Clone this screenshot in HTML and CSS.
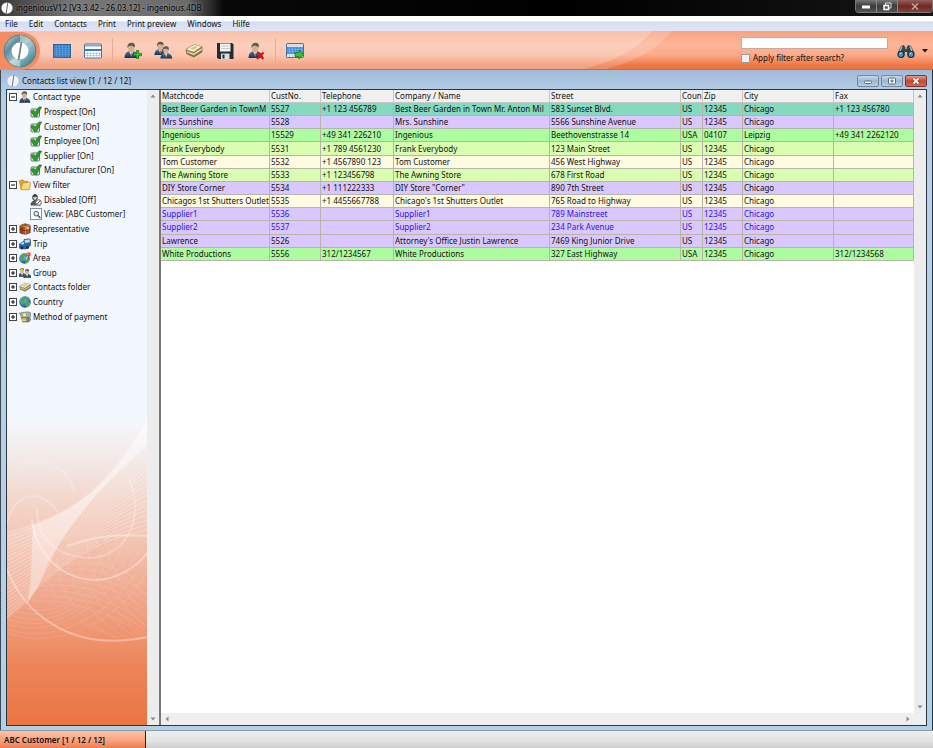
FILE: index.html
```
<!DOCTYPE html>
<html lang="en">
<head>
  <meta charset="UTF-8">
  <meta name="viewport" content="width=device-width, initial-scale=1.0">
  <link rel="stylesheet" href="styles.css">
  <title>ingeniousV12 [V3.3.42 - 26.03.12] - ingenious.4DB</title>
</head>
<body>
  <!-- shared icon shapes -->
  <svg class="defs" width="0" height="0" aria-hidden="true">
    <defs>
      <linearGradient id="suit" x1="0" y1="0" x2="0" y2="1"><stop offset="0" stop-color="#4c7fa8"/><stop offset="1" stop-color="#102f50"/></linearGradient>
      <linearGradient id="ring" x1="0" y1="0" x2="1" y2="1"><stop offset="0" stop-color="#d8e4e6"/><stop offset=".3" stop-color="#5d8d9b"/><stop offset=".55" stop-color="#9fc5cc"/><stop offset="1" stop-color="#1b6884"/></linearGradient>
      <radialGradient id="sea" cx=".35" cy=".3" r=".8"><stop offset="0" stop-color="#8fd0f5"/><stop offset=".6" stop-color="#2c7cc4"/><stop offset="1" stop-color="#123c78"/></radialGradient>
      <symbol id="logo" viewBox="0 0 16 16">
        <circle cx="8" cy="8" r="7.5" fill="#fff"/>
        <path d="M9.200 0 6.800 16" fill="none" stroke="#555" stroke-width="1.200"/>
      </symbol>
      <symbol id="person" viewBox="0 0 16 16">
        <path d="M.5 15.500C.5 11 3 8.500 7 8.500s8 2 8 7z" fill="url(#suit)"/>
        <path d="M5.200 9h3.800L7.400 14z" fill="#fff"/>
        <path d="M6.600 10h1l.4 3.400-.8 1-.7-1z" fill="#c43"/>
        <ellipse cx="7.200" cy="5.300" rx="3.200" ry="4" fill="#d9b08a"/>
        <path d="M3.600 5.500C2.800 1.800 5.200.2 7.500.2c2.800 0 4 1.800 3.100 4.800C9.300 3.300 6.200 2.900 4.800 3.600z" fill="#5b5a55"/>
      </symbol>
      <symbol id="plus" viewBox="0 0 8 8"><path d="M3 .5h2V3h2.500v2H5v2.500H3V5H.5V3H3z" fill="#35c52c" stroke="#147516" stroke-width=".7"/></symbol>
      <symbol id="folder" viewBox="0 0 18 14">
        <path d="M1 6 9 1.500 17 3.500v5L9 13.500 2 10.500z" fill="#8e7d50" stroke="#665b3c" stroke-width=".7"/>
        <path d="M1 6 9 1 17 3 8.500 8.500z" fill="#fbf8df" stroke="#9b8e68" stroke-width=".6"/>
        <path d="M2 8.200 8.600 10.800 17 5.500" fill="none" stroke="#f4e8b8" stroke-width="1.200"/>
        <path d="M5 5 10 2.500l3 1-5 3z" fill="#e2c566"/>
      </symbol>
      <symbol id="globe" viewBox="0 0 16 16">
        <circle cx="8" cy="8" r="7.300" fill="url(#sea)" stroke="#245586" stroke-width=".6"/>
        <path d="M2 5C4 1.500 7 1 9 1.500L10 4 7.500 5.500 8 8 5 9.500 3.500 8zM9 8.500l4-1.500 2 2c-.3 3-2.300 5-5 6L8.500 12zM11 3l2.500 1 1 2-2.500-.5z" fill="#4ea844"/>
      </symbol>
      <symbol id="check" viewBox="0 0 12 12">
        <rect x="1" y="3" width="8.500" height="8" rx="1" fill="#cfe3cf" stroke="#4f7a50" stroke-width=".9"/>
        <path d="M1 5.500 3.600 4.300 5.300 6.300 9 1h2.600L6.500 10.500H4.300z" fill="#2f9c2c" stroke="#155c16" stroke-width=".6"/>
      </symbol>
      <symbol id="open-box" viewBox="0 0 8 8"><rect x=".5" y=".5" width="7" height="7" fill="#fff" stroke="#444"/><path d="M2 4h4" stroke="#111"/></symbol>
      <symbol id="closed-box" viewBox="0 0 8 8"><rect x=".5" y=".5" width="7" height="7" fill="#fff" stroke="#444"/><path d="M2 4h4M4 2v4" stroke="#111"/></symbol>
      <symbol id="up" viewBox="0 0 6 4"><path d="M3 .5 5.500 3.500h-5z" fill="#888"/></symbol>
    </defs>
  </svg>

  <div class="app">
    <header class="titlebar">
      <svg class="title-logo"><use href="#logo"/></svg>
      <h1>ingeniousV12 [V3.3.42 - 26.03.12] - ingenious.4DB</h1>
      <div class="title-buttons">
        <button aria-label="Minimize"><svg width="10" height="8"><rect x="1" y="3.500" width="8" height="3" fill="#fff"/></svg></button>
        <button aria-label="Restore"><svg width="10" height="9"><path d="M3.500 3V1h5.500v5H7" fill="none" stroke="#ddd"/><rect x="2" y="3.500" width="4.500" height="4" fill="#555" stroke="#fff" stroke-width="1.500"/></svg></button>
        <button class="close" aria-label="Close"><svg width="10" height="9"><path d="M2 1.500 8 7.500M8 1.500 2 7.500" stroke="#c9a09c" stroke-width="1.500"/></svg></button>
      </div>
    </header>

    <nav class="menubar">
      <a href="#">File</a>
      <a href="#">Edit</a>
      <a href="#">Contacts</a>
      <a href="#">Print</a>
      <a href="#">Print preview</a>
      <a href="#">Windows</a>
      <a href="#">Hilfe</a>
    </nav>

    <div class="toolbar">
      <svg class="swoosh" viewBox="0 0 933 38" preserveAspectRatio="none" aria-hidden="true">
        <path d="M0 0H672Q652 26 606 38H0z" fill="#fff" opacity=".18"/>
        <path d="M0 0H652Q632 26 584 38H0z" fill="#fff" opacity=".2"/>
      </svg>
      <button class="home" aria-label="Home">
        <svg width="34" height="34" viewBox="0 0 34 34">
          <circle cx="17" cy="17" r="16" fill="url(#ring)" stroke="#5e7f88"/>
          <path d="M17 1a16 16 0 0 1 11 5l-7 6-4-2zM6 28a16 16 0 0 0 11 5v-8l-4-2z" fill="#e8f1ee" opacity=".45"/>
          <circle cx="17" cy="17" r="8.500" fill="#fff"/>
          <path d="M18.500 8 15.500 26" fill="none" stroke="#647f88" stroke-width="1.600"/>
        </svg>
      </button>
      <div class="tools">
        <button aria-label="Show all">
          <svg width="20" height="20" viewBox="0 0 20 20"><rect x="1.500" y="3.500" width="17" height="13" fill="#3280cf" stroke="#2c669e"/><path d="M2 5.500h16M2 7.500h16M2 9.500h16M2 11.500h16M2 13.500h16M4.500 4v12M7.500 4v12M10.500 4v12M13.500 4v12M16.500 4v12" stroke="#73aee6" stroke-width=".4"/></svg>
        </button>
        <button aria-label="Show selection">
          <svg width="20" height="20" viewBox="0 0 20 20"><rect x="1.500" y="3" width="17" height="14" rx="1" fill="#fff" stroke="#45719d"/><path d="M2 4.500h16" stroke="#88a9ca" stroke-width="2"/><rect x="2" y="8" width="16" height="2" fill="#2e7fcb"/><path d="M2 12.500h16M2 14.500h16M4.500 11v6M7.500 11v6M10.500 11v6M13.500 11v6M16.500 11v6" stroke="#a8c2da" stroke-width=".7"/></svg>
        </button>
      </div>
      <span class="separator"></span>
      <div class="tools">
        <button aria-label="New contact"><svg width="20" height="20" viewBox="0 0 20 20"><use href="#person" x="2" y="1" width="16" height="17"/><use href="#plus" x="11" y="9" width="9" height="9"/></svg></button>
        <button aria-label="Contacts"><svg width="20" height="20" viewBox="0 0 20 20"><use href="#person" x="1" y="0" width="14" height="15"/><use href="#person" x="7" y="4" width="13" height="15"/></svg></button>
        <button aria-label="Contacts folder"><svg width="20" height="20" viewBox="0 0 20 20"><use href="#folder" x="1" y="2" width="18" height="15"/></svg></button>
        <button aria-label="Save"><svg width="20" height="20" viewBox="0 0 20 20"><path d="M2 2h15l1.500 1.500V18H3.500L2 16.500z" fill="#252a2e"/><rect x="5" y="2.500" width="10.500" height="8" fill="#f4f4f4"/><path d="M6 5h8.500M6 7.500h8.500" stroke="#c9c9c9"/><rect x="6" y="12.500" width="8.500" height="5.500" fill="#d9dcdf"/><rect x="7.500" y="13.500" width="2" height="4" fill="#252a2e"/></svg></button>
        <button aria-label="Delete contact"><svg width="20" height="20" viewBox="0 0 20 20"><use href="#person" x="2" y="1" width="16" height="17"/><path d="M11 11.500 17.500 18M17.500 11.500 11 18" stroke="#d31515" stroke-width="2.200"/></svg></button>
      </div>
      <span class="separator"></span>
      <div class="tools">
        <button aria-label="Export list">
          <svg width="20" height="20" viewBox="0 0 20 20"><rect x="1.500" y="2.500" width="17" height="14" rx="1" fill="#4290d8" stroke="#45719d"/><rect x="2" y="3" width="16" height="3" fill="#d5dfe9"/><path d="M2 8.500h16M2 10.500h16" stroke="#78b0e4" stroke-width=".6"/><rect x="2" y="13" width="16" height="3" fill="#dce9f5"/><path d="M4.500 6v10M7.500 6v10M10.500 6v10M13.500 6v10M16.500 6v10" stroke="#8dbce6" stroke-width=".5"/><path d="M10 11.500h4V9l5 4.500-5 4.500v-2.500h-4z" fill="#36c22f" stroke="#157517" stroke-width=".8"/></svg>
        </button>
      </div>
      <div class="search">
        <input type="text" class="search-box" aria-label="Search">
        <label class="filter"><input type="checkbox"> Apply filter after search?</label>
      </div>
      <button class="find" aria-label="Find">
        <svg width="18" height="16" viewBox="0 0 18 16"><path d="M4 3 7 2l1 2h2l1-2 3 1 3.500 7-4 4H11L10 9H8l-1 5H4L.5 10z" fill="#34464b"/><path d="M5 3.500 3 8M13 3.500 15 8M8 5h2" stroke="#b7c8c8" stroke-width="1.300"/><circle cx="4" cy="11.500" r="3" fill="#4e91be" stroke="#142c3a" stroke-width="1.200"/><circle cx="14" cy="11.500" r="3" fill="#4e91be" stroke="#142c3a" stroke-width="1.200"/><path d="M2.500 11 4.500 9.500M12.500 11l2-1.500" stroke="#d5ebf8"/></svg>
      </button>
      <button class="drop" aria-label="Search options"><svg width="6" height="4"><path d="M0 0h6L3 3.500z" fill="#151515"/></svg></button>
    </div>

    <main class="window">
      <header class="caption">
        <svg class="caption-logo"><use href="#logo"/></svg>
        <h2>Contacts list view [1 / 12 / 12]</h2>
        <div class="caption-buttons">
          <button aria-label="Minimize list"><svg width="10" height="8"><rect x="1.500" y="4" width="7" height="2.500" rx="1" fill="#fff" stroke="#59687a"/></svg></button>
          <button aria-label="Maximize list"><svg width="10" height="8"><rect x="1.500" y="1" width="7" height="6" rx="1" fill="#fff" stroke="#59687a"/><rect x="4" y="3" width="2" height="2" fill="#8da6c0" stroke="#59687a" stroke-width=".7"/></svg></button>
          <button class="close" aria-label="Close list"><svg width="10" height="8"><path d="M2.500 1.500 7.500 6.500M7.500 1.500 2.500 6.500" stroke="#5e2a28" stroke-width="3"/><path d="M2.500 1.500 7.500 6.500M7.500 1.500 2.500 6.500" stroke="#fff" stroke-width="1.800"/></svg></button>
        </div>
      </header>

      <div class="panes">
        <aside class="sidebar">
          <div class="tree-area">
            <ul class="tree">
              <li><svg class="box"><use href="#open-box"/></svg><svg class="icon"><use href="#person"/></svg>Contact type</li>
              <li class="child"><svg class="icon"><use href="#check"/></svg><span class="current">Prospect [On]</span></li>
              <li class="child"><svg class="icon"><use href="#check"/></svg>Customer [On]</li>
              <li class="child"><svg class="icon"><use href="#check"/></svg>Employee [On]</li>
              <li class="child"><svg class="icon"><use href="#check"/></svg>Supplier [On]</li>
              <li class="child"><svg class="icon"><use href="#check"/></svg>Manufacturer [On]</li>
              <li><svg class="box"><use href="#open-box"/></svg><svg class="icon" viewBox="0 0 12 12"><path d="M.5 3V1.500L4 .8l1.500 1.500H9v8.200H2z" fill="#e2a32e" stroke="#b77c1c" stroke-width=".6"/><path d="M2 10.800 3.500 4.500 11.600 3.500 10.500 10.800z" fill="#fbd871" stroke="#bd8420" stroke-width=".6"/><path d="M4.300 5.300 10.500 4.600" stroke="#fff3bd"/></svg>View filter</li>
              <li class="child"><svg class="icon" viewBox="0 0 12 12"><path d="M.5 11.500c0-3.500 2-5 5-5s5 1.500 5 5z" fill="#555"/><ellipse cx="5" cy="3.500" rx="2.300" ry="3" fill="#ccc" stroke="#333"/><path d="M3 3C3 0 7 0 7.300 2.500z" fill="#333"/><circle cx="8.500" cy="8.500" r="2.800" fill="#eee" stroke="#666"/><path d="M6.600 10.400 10.400 6.600" stroke="#666"/></svg>Disabled [Off]</li>
              <li class="child"><svg class="icon" viewBox="0 0 12 12"><rect x=".5" y=".5" width="11" height="11" fill="#fff" stroke="#8091a3"/><circle cx="6.200" cy="5.700" r="2.300" fill="#d9ecf8" stroke="#45566a"/><path d="M8 7.500 10.300 10" stroke="#45566a" stroke-width="1.500"/></svg>View: [ABC Customer]</li>
              <li><svg class="box"><use href="#closed-box"/></svg><svg class="icon" viewBox="0 0 12 12"><path d="M.8 2.500 6 .7l5.300 1.500v7.500L6.500 11.500.8 10z" fill="#a75424" stroke="#6b3516" stroke-width=".6"/><path d="M.8 2.500 6.500 3.800 11.300 2.200M6.500 3.800v7.700" stroke="#e1a169" fill="none" stroke-width=".8"/><path d="M3 3v8M1 6.500l5.500 1 5-1.500" stroke="#5e2c10" fill="none" stroke-width=".7"/><rect x="7.500" y="4" width="2.500" height="2.500" fill="#e9b880"/></svg>Representative</li>
              <li><svg class="box"><use href="#closed-box"/></svg><svg class="icon" viewBox="0 0 12 12"><path d="M.5 6 5 3V1.500L10.500.8l1 1V7.500L7 11l-6.500-.7z" fill="#2565a0" stroke="#173b5c" stroke-width=".6"/><path d="M5.500 2 10.800 1.300v3L6 5z" fill="#b9dbf1"/><path d="M1.200 6 4.800 3.800v2.700z" fill="#d8edf9"/><circle cx="3" cy="10" r="1.400" fill="#222"/><circle cx="8.500" cy="9.600" r="1.400" fill="#222"/></svg>Trip</li>
              <li><svg class="box"><use href="#closed-box"/></svg><svg class="icon" viewBox="0 0 12 12"><use href="#globe" x="0" y="1" width="11" height="11"/><circle cx="9.500" cy="2.500" r="2.300" fill="#e2503d"/><path d="M8.500 4.500 7 7.500" stroke="#eee"/><circle cx="9" cy="2" r=".7" fill="#ffc5b8"/></svg>Area</li>
              <li><svg class="box"><use href="#closed-box"/></svg><svg class="icon" viewBox="0 0 12 12"><use href="#person" x="-1" y="0" width="9" height="11"/><use href="#person" x="4" y="1" width="9" height="11"/><ellipse cx="3" cy="3.500" rx="1.500" ry="2" fill="#e9bf4c"/></svg>Group</li>
              <li><svg class="box"><use href="#closed-box"/></svg><svg class="icon"><use href="#folder"/></svg>Contacts folder</li>
              <li><svg class="box"><use href="#closed-box"/></svg><svg class="icon"><use href="#globe"/></svg>Country</li>
              <li><svg class="box"><use href="#closed-box"/></svg><svg class="icon" viewBox="0 0 12 12"><path d="M.5 2 9 .8l2.500 1V6L3 7.500z" fill="#a7b58d" stroke="#66705a" stroke-width=".6"/><circle cx="5.500" cy="3.800" r="1.500" fill="#e8edd8"/><path d="M2.500 6.500h7V11h-6z" fill="#b49b63" stroke="#6e5c38" stroke-width=".6"/><path d="M3 8h6M3 9.500h6" stroke="#efe0b2" stroke-width=".8"/><circle cx="9.500" cy="8.500" r="2" fill="#7f8a7d" stroke="#555" stroke-width=".5"/></svg>Method of payment</li>
            </ul>
            <svg class="waves" viewBox="0 0 140 306" preserveAspectRatio="none" aria-hidden="true">
              <g fill="none" stroke="#fff">
                <path d="M0 114C45 100 90 85 140 0V30C100 60 65 100 50 130 38 155 30 175 20 184L0 200z" fill="#fff" fill-opacity=".15" stroke="none"/>
                <path d="M26 106C75 90 105 60 140 2V26C100 60 66 100 42 142 36 156 30 172 20 184 26 160 24 130 26 106z" fill="#fff" fill-opacity=".35" stroke="none"/>
                <g opacity=".4" stroke-width=".8">
                  <path d="M0 114C35 102 95 90 140 6M0 118C36 105 92 90 140 11M0 122C37 108 90 91 140 16M0 126C37 111 87 93 140 21M0 130C38 114 85 95 140 26M0 134C38 117 83 97 140 31M0 138C38 120 80 100 140 36"/>
                  <path d="M0 142C38 123 78 103 140 41M0 146C38 126 76 105 140 46M0 150C38 130 74 108 140 51M0 154C38 134 72 110 140 56M0 158C38 138 70 112 140 61M0 162C38 142 69 114 140 66M0 166C37 146 68 116 140 71"/>
                  <path d="M0 170C36 150 66 118 140 76M0 174C35 154 65 120 140 81M0 178C33 158 63 122 140 86M0 182C32 162 62 123 140 91M0 186C30 166 61 124 140 96M0 190C29 170 60 125 140 101M0 194C27 174 59 126 140 106M0 198C25 178 58 127 140 111"/>
                </g>
                <g opacity=".18" stroke-width=".6">
                  <path d="M0 205C60 225 110 170 140 120M0 200C60 220 105 170 130 118M4 196C60 214 100 170 120 117M10 192C60 208 95 168 110 116M16 188C60 202 88 165 100 117M0 210C60 230 120 180 140 135M0 214C60 235 125 190 140 150"/>
                  <path d="M25 182C50 180 110 190 140 222M28 177C55 174 115 186 140 215M31 172C60 168 115 181 140 208M34 167C65 162 120 176 140 200M37 162C70 156 120 171 140 192M40 157C75 150 120 165 140 184M43 152C80 144 120 158 140 176M46 147C85 138 120 150 140 168"/>
                  <path d="M60 130C60 170 90 205 125 221M70 127C70 160 100 205 135 221M80 124C80 155 110 200 140 217M90 121C90 150 115 190 140 208M100 120C100 145 120 180 140 196M110 120C110 140 125 165 140 178M50 138C50 175 80 208 110 219M40 155C45 185 75 205 100 215"/>
                </g>
                <path d="M0 150C15 190 60 235 140 218" opacity=".35" stroke-width="2"/>
                <path d="M25 100C28 135 55 161 90 161 110 160 130 148 140 134" opacity=".35" stroke-width="2"/>
                <path d="M30 90C30 120 50 138 83 139 112 137 128 115 128 88 128 78 126 70 122 60" opacity=".25" stroke-width="2"/>
                <path d="M0 105C5 75 35 65 52 96" opacity=".22" stroke-width="2"/>
                <path d="M12 46C40 38 60 48 67 72" opacity=".18" stroke-width="2"/>
                <path d="M60 127C95 114 120 116 140 117" opacity=".35" stroke-width="2"/>
              </g>
            </svg>
          </div>
          <div class="scroll-v">
            <button aria-label="Scroll tree up"><svg width="6" height="4"><use href="#up"/></svg></button>
            <button class="down" aria-label="Scroll tree down"><svg width="6" height="4"><use href="#up"/></svg></button>
          </div>
        </aside>

        <section class="list">
          <div class="list-body">
            <div class="table-wrap">
              <table>
                <colgroup>
                  <col class="c-match"><col class="c-no"><col class="c-tel"><col class="c-name"><col class="c-street"><col class="c-country"><col class="c-zip"><col class="c-city"><col class="c-fax">
                </colgroup>
                <thead>
                  <tr><th>Matchcode</th><th>CustNo.</th><th>Telephone</th><th>Company / Name</th><th>Street</th><th>Coun</th><th>Zip</th><th>City</th><th>Fax</th></tr>
                </thead>
                <tbody>
                  <tr class="teal"><td>Best Beer Garden in TownM</td><td>5527</td><td>+1 123 456789</td><td>Best Beer Garden in Town Mr. Anton Mil</td><td>583 Sunset Blvd.</td><td>US</td><td>12345</td><td>Chicago</td><td>+1 123 456780</td></tr>
                  <tr class="violet"><td>Mrs Sunshine</td><td>5528</td><td></td><td>Mrs. Sunshine</td><td>5566 Sunshine Avenue</td><td>US</td><td>12345</td><td>Chicago</td><td></td></tr>
                  <tr class="green"><td>Ingenious</td><td>15529</td><td>+49 341 226210</td><td>Ingenious</td><td>Beethovenstrasse 14</td><td>USA</td><td>04107</td><td>Leipzig</td><td>+49 341 2262120</td></tr>
                  <tr class="lime"><td>Frank Everybody</td><td>5531</td><td>+1 789 4561230</td><td>Frank Everybody</td><td>123 Main Street</td><td>US</td><td>12345</td><td>Chicago</td><td></td></tr>
                  <tr class="cream"><td>Tom Customer</td><td>5532</td><td>+1 4567890 123</td><td>Tom Customer</td><td>456 West Highway</td><td>US</td><td>12345</td><td>Chicago</td><td></td></tr>
                  <tr class="lime"><td>The Awning Store</td><td>5533</td><td>+1 123456798</td><td>The Awning Store</td><td>678 First Road</td><td>US</td><td>12345</td><td>Chicago</td><td></td></tr>
                  <tr class="violet"><td>DIY Store Corner</td><td>5534</td><td>+1 111222333</td><td>DIY Store "Corner"</td><td>890 7th Street</td><td>US</td><td>12345</td><td>Chicago</td><td></td></tr>
                  <tr class="cream"><td>Chicagos 1st Shutters Outlet</td><td>5535</td><td>+1 4455667788</td><td>Chicago's 1st Shutters Outlet</td><td>765 Road to Highway</td><td>US</td><td>12345</td><td>Chicago</td><td></td></tr>
                  <tr class="violet supplier"><td>Supplier1</td><td>5536</td><td></td><td>Supplier1</td><td>789 Mainstreet</td><td>US</td><td>12345</td><td>Chicago</td><td></td></tr>
                  <tr class="violet supplier"><td>Supplier2</td><td>5537</td><td></td><td>Supplier2</td><td>234 Park Avenue</td><td>US</td><td>12345</td><td>Chicago</td><td></td></tr>
                  <tr class="violet"><td>Lawrence</td><td>5526</td><td></td><td>Attorney's Office Justin Lawrence</td><td>7469 King Junior Drive</td><td>US</td><td>12345</td><td>Chicago</td><td></td></tr>
                  <tr class="green"><td>White Productions</td><td>5556</td><td>312/1234567</td><td>White Productions</td><td>327 East Highway</td><td>USA</td><td>12345</td><td>Chicago</td><td>312/1234568</td></tr>
                </tbody>
              </table>
            </div>
            <div class="scroll-v">
              <button aria-label="Scroll list up"><svg width="6" height="4"><use href="#up"/></svg></button>
              <button class="down" aria-label="Scroll list down"><svg width="6" height="4"><use href="#up"/></svg></button>
            </div>
          </div>
          <div class="scroll-h">
            <button class="left" aria-label="Scroll list left"><svg width="6" height="4"><use href="#up"/></svg></button>
            <button class="right" aria-label="Scroll list right"><svg width="6" height="4"><use href="#up"/></svg></button>
          </div>
        </section>
      </div>
    </main>

    <footer class="statusbar">
      <div class="status">ABC Customer [1 / 12 / 12]</div>
    </footer>
  </div>
</body>
</html>
```
FILE: styles.css
```
* {
  box-sizing: border-box;
}

body {
  margin: 0;
  font-family: "Noto Sans", "Open Sans", sans-serif;
  font-size: 8px;
  line-height: 12px;
  color: #111;
}

h1, h2 {
  margin: 0;
  font-size: 8px;
  font-weight: normal;
}

button {
  display: flex;
  align-items: center;
  justify-content: center;
  padding: 0;
  border: none;
  background: none;
}

.defs {
  position: absolute;
}

.app {
  display: flex;
  flex-direction: column;
  height: 100vh;
}

/* title bar */
.titlebar {
  display: flex;
  align-items: center;
  height: 16px;
  padding-left: 1px;
  background: linear-gradient(90deg, #3a3a3a, #777 8%, #6b6b6b 20%, #080808 24%, #000 60%, #151515);
}

.title-logo {
  width: 12px;
  height: 12px;
  margin-right: 3px;
}

.titlebar h1 {
  color: #000;
  text-shadow: 0 0 3px #aaa;
}

.title-buttons {
  display: flex;
  align-self: flex-start;
  height: 13px;
  margin-left: auto;
  border: 1px solid #777;
  border-top: none;
  border-radius: 0 0 4px 4px;
  overflow: hidden;
}

.title-buttons button {
  width: 21px;
  border-right: 1px solid #888;
  background: linear-gradient(#777, #3c3c3c 50%, #555);
}

.title-buttons .close {
  width: 34px;
  border-right: none;
  background: linear-gradient(#96605a, #6d2a24 50%, #85403a);
}

/* menu */
.menubar {
  display: flex;
  align-items: center;
  gap: 11px;
  height: 15px;
  padding-left: 5px;
  background: linear-gradient(#fff 30%, #d6def2 40%, #dfe5f7);
}

.menubar a {
  color: #111;
  text-decoration: none;
}

/* toolbar */
.toolbar {
  position: relative;
  display: flex;
  align-items: center;
  height: 39px;
  padding-right: 4px;
  background: linear-gradient(#f9a27e, #fdb598 35%, #fbac8c 60%, #ee7440 90%, #ee7440 96%, #b8694d);
}

.swoosh {
  position: absolute;
  left: 0;
  top: 0;
  width: 100%;
  height: 38px;
}

.toolbar button,
.search {
  position: relative;
}

.home {
  width: 40px;
  height: 38px;
  margin-right: 12px;
  border-radius: 0 20px 20px 0;
  background: #f38b63;
}

.tools {
  display: flex;
  gap: 11px;
}

.tools button {
  width: 20px;
  height: 20px;
}

.separator {
  width: 1px;
  height: 26px;
  margin: 0 9px;
  background: #dc8260;
}

.search {
  display: flex;
  flex-direction: column;
  gap: 3px;
  width: 147px;
  margin-left: auto;
}

.search-box {
  width: 100%;
  height: 12px;
  padding: 0 2px;
  border: 1px solid #c9a99c;
  background: #fff;
  font: inherit;
}

.filter {
  display: flex;
  align-items: center;
  gap: 3px;
  white-space: nowrap;
}

.filter input {
  appearance: none;
  width: 9px;
  height: 9px;
  margin: 0;
  border: 1px solid #9b9b9b;
  background: #eef0f2;
}

.find {
  width: 18px;
  margin-left: 9px;
}

.drop {
  width: 8px;
  margin-left: 6px;
}

/* inner window */
.window {
  flex: 1;
  display: flex;
  flex-direction: column;
  min-height: 0;
  padding: 0 5px 4px 5px;
  border-left: 1px solid #3d4854;
  border-right: 1px solid #23323c;
  background: linear-gradient(#9fbad8, #b5cce6 20px, #b7cfe8 120px, #b4d0e8);
}

.caption {
  display: flex;
  align-items: center;
  height: 19px;
  padding: 2px 0 0 1px;
}

.caption-logo {
  width: 12px;
  height: 12px;
  margin-right: 3px;
  opacity: .8;
}

.caption-buttons {
  display: flex;
  gap: 2px;
  margin-left: auto;
}

.caption-buttons button {
  width: 22px;
  height: 12px;
  border: 1px solid #7489a1;
  border-radius: 2px;
  background: linear-gradient(#c8d9eb, #9db5cf 50%, #b8cde3);
}

.caption-buttons .close {
  border-color: #7c3634;
  background: linear-gradient(#e59c8c, #c74630 50%, #d8684e);
}

.panes {
  flex: 1;
  display: flex;
  min-height: 0;
  border: 1px solid #2c3740;
}

.sidebar {
  display: flex;
  width: 154px;
  border-right: 2px solid #777;
}

.tree-area {
  flex: 1;
  display: flex;
  flex-direction: column;
  justify-content: space-between;
  background: linear-gradient(#f3f8fe 52%, #f3e4df 60%, #f3c7b6 70%, #f0a386 81%, #ed8458 91%, #eb7542);
}

.tree {
  display: flex;
  flex-direction: column;
  height: 234px;
  margin: 0;
  padding: 0 0 0 2px;
  list-style: none;
}

.tree li {
  flex: 1;
  display: flex;
  align-items: center;
  white-space: nowrap;
}

.tree .child {
  padding-left: 21px;
}

.box {
  width: 8px;
  height: 8px;
  margin-right: 2px;
}

.icon {
  width: 12px;
  height: 12px;
  margin-right: 2px;
}

.current {
  background: #f0f0ee;
}

.waves {
  width: 100%;
  height: 306px;
}

/* scroll bars */
.scroll-v {
  display: flex;
  flex-direction: column;
  justify-content: space-between;
  width: 12px;
  background: #ededed;
}

.scroll-v button {
  width: 12px;
  height: 12px;
}

.scroll-h {
  display: flex;
  justify-content: space-between;
  height: 12px;
  padding-right: 12px;
  background: #efefef;
}

.scroll-h button {
  width: 12px;
  height: 12px;
}

.down svg {
  transform: rotate(180deg);
}

.left svg {
  transform: rotate(-90deg);
}

.right svg {
  transform: rotate(90deg);
}

/* contacts list */
.list {
  flex: 1;
  display: flex;
  flex-direction: column;
  min-width: 0;
  background: #fff;
}

.list-body {
  flex: 1;
  display: flex;
}

.table-wrap {
  flex: 1;
  min-width: 0;
}

table {
  width: 100%;
  height: 171px;
  table-layout: fixed;
  border-collapse: separate;
  border-spacing: 0;
}

.c-match { width: 109px; }
.c-no { width: 51px; }
.c-tel { width: 73px; }
.c-name { width: 156px; }
.c-street { width: 131px; }
.c-country { width: 22px; }
.c-zip { width: 40px; }
.c-city { width: 91px; }
.c-fax { width: 80px; }

th, td {
  height: 13px;
  padding: 0 0 0 1px;
  border-right: 1px solid #b5b5aa;
  border-bottom: 1px solid #b5b5aa;
  font-weight: normal;
  line-height: 12px;
  text-align: left;
  white-space: nowrap;
  overflow: hidden;
}

th {
  border-color: #c8c8c8;
  background: #f0f0f0;
}

.teal { background: #84d9bf; }
.violet { background: #dac7ff; }
.green { background: #adfca0; }
.lime { background: #d9feb1; }
.cream { background: #fffbe0; }
.supplier { color: #2a14e6; }

/* status bar */
.statusbar {
  display: flex;
  height: 18px;
  border-top: 1px solid #8a9aa8;
  background: linear-gradient(#ededed, #e2e2e2 60%, #cecece);
}

.status {
  display: flex;
  align-items: center;
  width: 146px;
  padding-left: 4px;
  border-right: 1px solid #222;
  background: linear-gradient(#ffc0a5, #f9a684 50%, #ef7d4e);
  font-weight: 600;
}
```
